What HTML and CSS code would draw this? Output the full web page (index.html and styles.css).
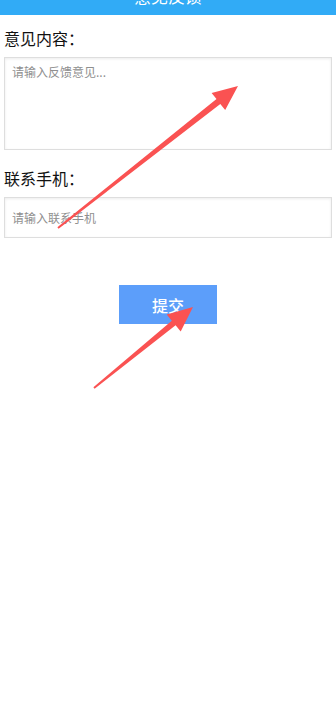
FILE: index.html
```html
<!DOCTYPE html>
<html lang="zh-CN">
<head>
    <meta charset="UTF-8">
    <meta name="viewport" content="width=device-width, initial-scale=1.0">
    <title>意见反馈</title>
    <link rel="stylesheet" href="styles.css">
</head>
<body>

    <div class="header">
        <h1>意见反馈</h1>
    </div>

    <div class="form">
        <p class="label">意见内容：</p>
        <textarea class="field area" placeholder="请输入反馈意见..."></textarea>

        <p class="label label-phone">联系手机：</p>
        <input class="field phone" type="text" placeholder="请输入联系手机">

        <div class="actions">
            <button class="button">提交</button>
        </div>
    </div>

    <!-- 标注箭头 -->
    <svg class="marks" viewBox="0 0 336 705">
        <polygon points="57.4,227.2 58.6,228.8 220.3,103.9 225.2,110.1 238,86 211.6,92.9 216.5,99.1" />
        <polygon points="93.4,387.2 94.6,388.8 175.6,325.3 180.7,331.5 193,307 166.7,314.5 171.8,320.7" />
    </svg>

</body>
</html>
```

FILE: styles.css
```css
html, body {
    min-height: 705px;
}

body {
    font-family: "Noto Sans CJK SC", "Noto Sans", sans-serif;
    background-color: #fff;
    color: #111;
    margin: 0;
    padding: 0;
    position: relative;
}

.header {
    height: 15px;
    overflow: hidden;
    background-color: #31abf6;
    text-align: center;
}

.header h1 {
    margin: -13px 0 0;
    font-size: 17px;
    line-height: 17px;
    font-weight: normal;
    color: #fff;
}

.form {
    padding: 0 4px;
}

.label {
    margin: 12px 0 8px;
    font-size: 16px;
    line-height: 22px;
}

.label-phone {
    margin-top: 17px;
}

.field {
    display: block;
    box-sizing: border-box;
    width: 100%;
    margin: 0;
    border: 1px solid #dedede;
    border-radius: 0;
    box-shadow: inset 0 1px 3px rgba(0, 0, 0, 0.08);
    font-family: inherit;
    font-size: 12px;
    color: #333;
    background: #fff;
    outline: none;
}

.field::placeholder {
    color: #8f8f8f;
}

.area {
    height: 93px;
    padding: 5px 7px;
    line-height: 17px;
    resize: none;
}

.phone {
    height: 41px;
    padding: 0 7px;
}

.actions {
    margin-top: 47px;
    text-align: center;
}

.button {
    width: 98px;
    height: 39px;
    background-color: #5c9efa;
    color: white;
    font-family: inherit;
    font-size: 16px;
    font-weight: 500;
    border: none;
    cursor: pointer;
}

.marks {
    position: absolute;
    left: 0;
    top: 0;
    width: 336px;
    height: 705px;
    overflow: visible;
    pointer-events: none;
}

.marks polygon {
    fill: #fa5252;
}
```
